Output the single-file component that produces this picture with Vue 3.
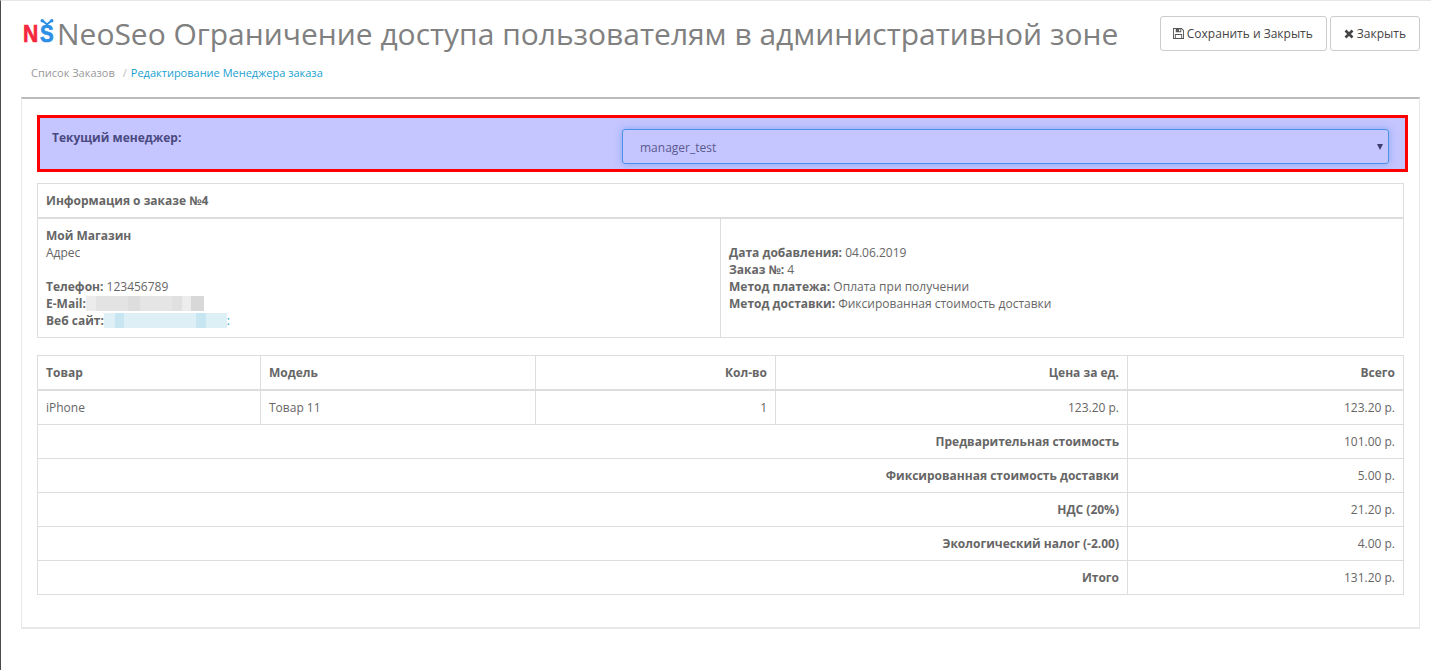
<script setup>
const products = [{ name: 'iPhone', model: 'Товар 11', qty: 1, price: '123.20 р.', total: '123.20 р.' }]
const totals = [
  ['Предварительная стоимость', '101.00 р.'],
  ['Фиксированная стоимость доставки', '5.00 р.'],
  ['НДС (20%)', '21.20 р.'],
  ['Экологический налог (-2.00)', '4.00 р.'],
  ['Итого', '131.20 р.']
]
</script>

<template>
  <div class="page">
    <header class="head">
      <div class="head-top">
        <h1 class="title">
          <span class="logo">
            <span class="logo-n">N</span>
            <span class="logo-s">S</span>
            <svg class="logo-horns" width="14" height="8" viewBox="0 0 14 8">
              <path d="M2.5 1.5 L7 5.5 L11.5 1.5" fill="none" stroke="#2b8fe6" stroke-width="2" />
              <circle cx="2.2" cy="1.8" r="1.7" fill="#2b8fe6" />
              <circle cx="11.8" cy="1.8" r="1.7" fill="#2b8fe6" />
            </svg>
          </span>
          <span>NeoSeo Ограничение доступа пользователям в административной зоне</span>
        </h1>
        <div class="actions">
          <button class="btn btn-save" type="button">
            <svg width="11" height="11" viewBox="0 0 12 12"><path fill-rule="evenodd" d="M0 0h9.5L12 2.5V12H0zM1 1v10h1V6.5h8V11h1V3L9.2 1H9v3.5H3V1zM3 7.5V11h6V7.5zM6.5 1.3V3.6H8V1.3z" fill="#555" /></svg>
            Сохранить и Закрыть
          </button>
          <button class="btn" type="button">
            <svg width="10" height="10" viewBox="0 0 10 10"><path d="M1.5 1.5l7 7M8.5 1.5l-7 7" stroke="#444" stroke-width="2.6" /></svg>
            Закрыть
          </button>
        </div>
      </div>
      <nav class="crumbs">
        <span class="crumb-muted">Список Заказов</span>
        <span class="crumb-sep">/</span>
        <a class="crumb-link">Редактирование Менеджера заказа</a>
      </nav>
    </header>

    <section class="panel">
      <div class="manager">
        <label class="manager-label">Текущий менеджер:</label>
        <div class="select">
          <span>manager_test</span>
          <i class="caret"></i>
        </div>
      </div>

      <table class="tbl info">
        <thead>
          <tr><th colspan="2">Информация о заказе №4</th></tr>
        </thead>
        <tbody>
          <tr>
            <td class="half">
              <b>Мой Магазин</b><br />
              Адрес<br /><br />
              <b>Телефон:</b> 123456789<br />
              <b>E-Mail:</b><span class="blur blur-grey"></span><br />
              <b>Веб сайт:</b><span class="blur blur-blue"></span><a class="colon">:</a>
            </td>
            <td class="half mid">
              <b>Дата добавления:</b> 04.06.2019<br />
              <b>Заказ №:</b> 4<br />
              <b>Метод платежа:</b> Оплата при получении<br />
              <b>Метод доставки:</b> Фиксированная стоимость доставки
            </td>
          </tr>
        </tbody>
      </table>

      <table class="tbl items">
        <colgroup>
          <col class="c1" /><col class="c2" /><col class="c3" /><col class="c4" /><col class="c5" />
        </colgroup>
        <thead>
          <tr>
            <th>Товар</th>
            <th>Модель</th>
            <th class="r">Кол-во</th>
            <th class="r">Цена за ед.</th>
            <th class="r">Всего</th>
          </tr>
        </thead>
        <tbody>
          <tr v-for="p in products" :key="p.name">
            <td>{{ p.name }}</td>
            <td>{{ p.model }}</td>
            <td class="r">{{ p.qty }}</td>
            <td class="r">{{ p.price }}</td>
            <td class="r">{{ p.total }}</td>
          </tr>
          <tr v-for="t in totals" :key="t[0]">
            <td colspan="4" class="r"><b>{{ t[0] }}</b></td>
            <td class="r">{{ t[1] }}</td>
          </tr>
        </tbody>
      </table>
    </section>
  </div>
</template>

<style>
html, body { margin: 0; background: #fff; }
</style>

<style scoped>
.page {
  box-sizing: border-box;
  min-height: 670px;
  border-left: 1px solid #4a4a4a;
  border-top: 1px solid #e6e6e6;
  padding: 0 11px 0 20px;
  font-family: "Open Sans", sans-serif;
  font-size: 12px;
  line-height: 17px;
  color: #666;
  background: #fff;
}
.head { height: 96px; }
.head-top {
  display: flex;
  justify-content: space-between;
  align-items: flex-start;
  padding-top: 15px;
}
.title {
  display: flex;
  align-items: center;
  margin: 0;
  height: 36px;
  font-size: 29.97px;
  line-height: 36px;
  font-weight: 400;
  color: #808080;
  white-space: nowrap;
}
.logo {
  position: relative;
  display: flex;
  flex: none;
  width: 31px;
  margin: 0 3px 0 2px;
  height: 36px;
  font-family: "Liberation Sans", sans-serif;
  font-size: 24px;
  font-weight: 700;
  line-height: 36px;
  -webkit-text-stroke: .7px currentColor;
}
.logo-n { width: 17px; color: #f5273d; transform: scaleX(.88); transform-origin: 0 50%; }
.logo-s { width: 14px; color: #2b8fe6; transform: scaleX(.85); transform-origin: 0 50%; }
.logo-horns { position: absolute; left: 17px; top: 3px; }
.actions { display: flex; gap: 3px; }
.btn {
  box-sizing: border-box;
  display: inline-flex;
  align-items: center;
  gap: 3px;
  height: 35px;
  padding: 0 13px;
  background: #fff;
  border: 1px solid #ccc;
  border-radius: 3px;
  font: 12px "Open Sans", sans-serif;
  color: #444;
}
.btn-save { padding: 0 13px 0 12px; }
.crumbs {
  display: flex;
  padding: 12px 0 0 10px;
  font-size: 11px;
  line-height: 17px;
}
.crumb-muted { color: #999; }
.crumb-sep { color: #bbb; margin: 0 4px 0 8px; }
.crumb-link { color: #1a9fd0; }
.panel {
  box-sizing: border-box;
  height: 532px;
  padding: 16px 16px 0 15px;
  border: 1px solid #e8e8e8;
  border-top: 2px solid #bbb;
  border-bottom-width: 2px;
}
.manager {
  box-sizing: border-box;
  display: flex;
  height: 57px;
  width: 1371px;
  margin-bottom: 11px;
  padding: 10px 16px 0 12px;
  border: 3px solid #f00;
  background: #c5c5ff;
  color: #4a4a80;
}
.manager-label { width: 570px; padding-top: 1px; font-weight: 700; font-size: 12px; flex: none; }
.select {
  box-sizing: border-box;
  flex: 1;
  display: flex;
  align-items: center;
  justify-content: space-between;
  height: 35px;
  margin-top: 1px;
  padding: 1px 5px 0 17px;
  border: 1px solid #4d90e8;
  border-radius: 3px;
  color: #5a5a8e;
  box-shadow: 0 0 7px rgba(77, 144, 232, .55);
}
.caret {
  width: 0;
  height: 0;
  border: 3px solid transparent;
  border-top: 6px solid #3d3d70;
  border-bottom: 0;
}
.tbl {
  width: 1367px;
  table-layout: fixed;
  border-collapse: collapse;
  border: 1px solid #ddd;
  margin-bottom: 17px;
}
.tbl.items { width: 1366px; }
.tbl th, .tbl td {
  box-sizing: border-box;
  padding: 8px;
  border: 1px solid #ddd;
  font-weight: 400;
  text-align: left;
  vertical-align: top;
}
.tbl th { font-weight: 700; height: 35px; border-bottom-width: 2px; }
.info th { height: 34px; padding-bottom: 7px; }
.tbl td { height: 34px; }
.tbl b { font-weight: 700; }
.half { width: 50%; }
.mid { vertical-align: middle !important; }
.tbl .r { text-align: right; }
.c1 { width: 223px; }
.c2 { width: 275px; }
.c3 { width: 240px; }
.c4 { width: 352px; }
.c5 { width: 276px; }
.blur {
  display: inline-block;
  height: 15px;
  vertical-align: -3px;
}
.blur-grey {
  width: 118px;
  background: linear-gradient(90deg, #ececec 0 10px, #e3e3e3 10px 42px, #dddddd 42px 54px, #e5e5e5 54px 86px, #e0e0e0 86px 96px, #ececec 96px 105px, #d8d8d8 105px);
}
.blur-blue {
  width: 123px;
  background: linear-gradient(90deg, #dff0f7 0 11px, #c8e6f1 11px 20px, #def0f6 20px 92px, #c8e6f1 92px 102px, #dcf0f6 102px);
}
.colon { color: #1a9fd0; }
</style>
